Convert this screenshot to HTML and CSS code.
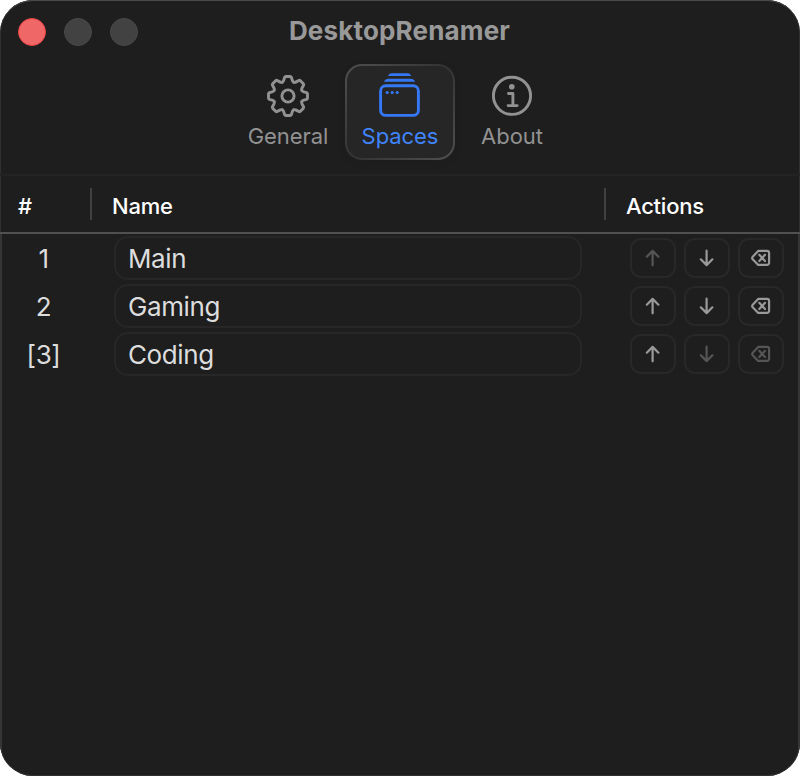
FILE: index.html
```html
<!DOCTYPE html>
<html lang="en">
<head>
<meta charset="utf-8">
<title>DesktopRenamer</title>
<link rel="stylesheet" href="styles.css">
</head>
<body>
<svg class="defs" aria-hidden="true">
  <symbol id="up" viewBox="0 0 20 20"><path d="M9.6 17.3V3M3.8 8.7L9.6 2.9l5.8 5.8"/></symbol>
  <symbol id="down" viewBox="0 0 20 20"><path d="M9.6 2.7V17M3.8 11.3L9.6 17.1l5.8-5.8"/></symbol>
  <symbol id="del" viewBox="0 0 20 20"><path d="M7.2 2.9H16a2.1 2.1 0 0 1 2.1 2.1v9.8a2.1 2.1 0 0 1-2.1 2.1H7.2L1.7 11.3a1.8 1.8 0 0 1 0-2.6zM8.3 6.8l5.7 6.2M14 6.8L8.3 13"/></symbol>
</svg>
<main class="window">
  <header class="toolbar">
    <div class="lights"><i class="light close"></i><i class="light"></i><i class="light"></i></div>
    <h1 class="title"><span>DesktopRenamer</span></h1>
    <nav class="tabs">
      <div class="tab general">
        <svg class="tab-icon" viewBox="-24 -24 48 48">
          <g id="gear">
            <path id="tooth" d="M-5.7 -13.8C-4.9 -14.2 -4.5 -14.8 -4.2 -15.8L-3.4 -18.6Q-3.1 -19.5 -2 -19.5H2Q3.1 -19.5 3.4 -18.6L4.2 -15.8C4.5 -14.8 4.9 -14.2 5.7 -13.8"/>
            <use href="#tooth" transform="rotate(45)"/><use href="#tooth" transform="rotate(90)"/><use href="#tooth" transform="rotate(135)"/><use href="#tooth" transform="rotate(180)"/><use href="#tooth" transform="rotate(225)"/><use href="#tooth" transform="rotate(270)"/><use href="#tooth" transform="rotate(315)"/>
          </g>
          <circle r="6.1"/>
        </svg>
        <span>General</span>
      </div>
      <div class="tab spaces">
        <svg class="tab-icon" viewBox="-24 -24 48 48">
          <rect x="-19.4" y="-10.2" width="37.8" height="29.6" rx="5.2"/>
          <path class="solid" d="M-16 -14.3C-14.8 -16.5 -13.7 -17.2 -11.5 -17.2H10.7C12.9 -17.2 14 -16.5 15.2 -14.3ZM-12 -20.1C-11 -22.2 -10 -22.8 -8 -22.8H7.2C9.2 -22.8 10.2 -22.2 11.2 -20.1Z"/>
          <g class="solid"><circle cx="-12.8" cy="-3.5" r="1.6"/><circle cx="-7.8" cy="-3.5" r="1.6"/><circle cx="-2.8" cy="-3.5" r="1.6"/></g>
        </svg>
        <span>Spaces</span>
      </div>
      <div class="tab about">
        <svg class="tab-icon" viewBox="-24 -24 48 48">
          <circle cy="-.2" r="18.6"/>
          <circle class="solid" cx="-.2" cy="-9.2" r="2.8"/>
          <path d="M-3.5 -2.5H.9V9.3M-3.9 9.6H5.2"/>
        </svg>
        <span>About</span>
      </div>
    </nav>
  </header>
  <section class="content">
    <div class="row head"><div class="num">#</div><div class="name">Name</div><div class="actions">Actions</div></div>
    <div class="list">
      <div class="row"><div class="num">1</div><div class="field">Main</div><div class="buttons"><b class="btn off"><svg><use href="#up"/></svg></b><b class="btn"><svg><use href="#down"/></svg></b><b class="btn"><svg><use href="#del"/></svg></b></div></div>
      <div class="row"><div class="num">2</div><div class="field">Gaming</div><div class="buttons"><b class="btn"><svg><use href="#up"/></svg></b><b class="btn"><svg><use href="#down"/></svg></b><b class="btn"><svg><use href="#del"/></svg></b></div></div>
      <div class="row"><div class="num">[3]</div><div class="field">Coding</div><div class="buttons"><b class="btn"><svg><use href="#up"/></svg></b><b class="btn off"><svg><use href="#down"/></svg></b><b class="btn off"><svg><use href="#del"/></svg></b></div></div>
    </div>
  </section>
</main>
</body>
</html>
```
FILE: styles.css
```css
* { box-sizing: border-box; }
body { margin: 0; background: #fff; font-family: Inter, "Liberation Sans", sans-serif; }
.defs { display: none; }
.window { display: flex; flex-direction: column; width: 800px; height: 776px; background: #1e1e1e; border-radius: 33px; overflow: hidden; box-shadow: inset 0 2px 0 -1px #4a4a4a, inset 0 0 0 1px #303030; }
.toolbar { display: grid; grid-template-columns: 160px 1fr 160px; grid-template-rows: 62px 1fr; height: 176px; border-bottom: 2px solid #232323; }
.lights { display: flex; gap: 18px; padding: 18px 0 0 18px; }
.light { width: 28px; height: 28px; border-radius: 50%; background: #424242; border: 1px solid #4a4a4a; }
.close { background: #f06767; border-color: #e94642; }
.title { margin: 0; padding-right: 1px; text-align: center; font-size: 26px; line-height: 62px; font-weight: 700; color: #999; letter-spacing: .17px; }
.tabs { grid-column: 1 / -1; display: flex; justify-content: center; gap: 2px; padding-top: 2px; }
.tab { display: flex; flex-direction: column; align-items: center; width: 110px; height: 96px; padding-top: 6px; border: 2px solid transparent; border-radius: 17px; color: #929292; font-size: 22px; font-weight: 425; line-height: 32px; letter-spacing: -.05px; }
.tab-icon { width: 48px; height: 48px; fill: none; stroke: currentColor; stroke-width: 2.9; stroke-linecap: round; stroke-linejoin: round; }
.solid { fill: currentColor; stroke: none; }
.spaces { background: linear-gradient(#262626, #262626) padding-box, linear-gradient(135deg, #505050, #333 50%, #505050) border-box; color: #3f84fb; box-shadow: 0 2px 8px #0001; }
.spaces .tab-icon { color: #3478f6; }
.content { flex: 1; display: flex; flex-direction: column; }
.row { display: grid; grid-template-columns: 88px 1fr 168px; align-items: center; height: 48px; }
.head { grid-template-columns: 92px 514px 1fr; height: 58px; border-bottom: 2px solid #505050; color: #fff; font-size: 22px; font-weight: 500; letter-spacing: -.25px; }
.head > div { height: 32px; line-height: 36px; padding-left: 20px; border-right: 2px solid #414141; }
.head .num { padding-left: 18px; }
.head .actions { border: 0; }
.list { flex: 1; border: solid #353535; border-width: 0 2px; color: #ddd; font-size: 26px; font-weight: 425; letter-spacing: -.4px; }
.list .num { text-align: center; padding-right: 5px; }
.field { width: 468px; height: 44px; margin-left: 24px; padding-left: 12px; border: 2px solid #272727; border-radius: 14px; line-height: 42px; }
.buttons { display: flex; gap: 8px; }
.btn { display: grid; place-items: center; width: 46px; height: 40px; border: 2px solid #282828; border-radius: 11px; color: #999; }
.btn svg { display: block; width: 20px; height: 20px; fill: none; stroke: currentColor; stroke-width: 2.2; stroke-linecap: round; stroke-linejoin: round; }
.off { color: #555; }
```
